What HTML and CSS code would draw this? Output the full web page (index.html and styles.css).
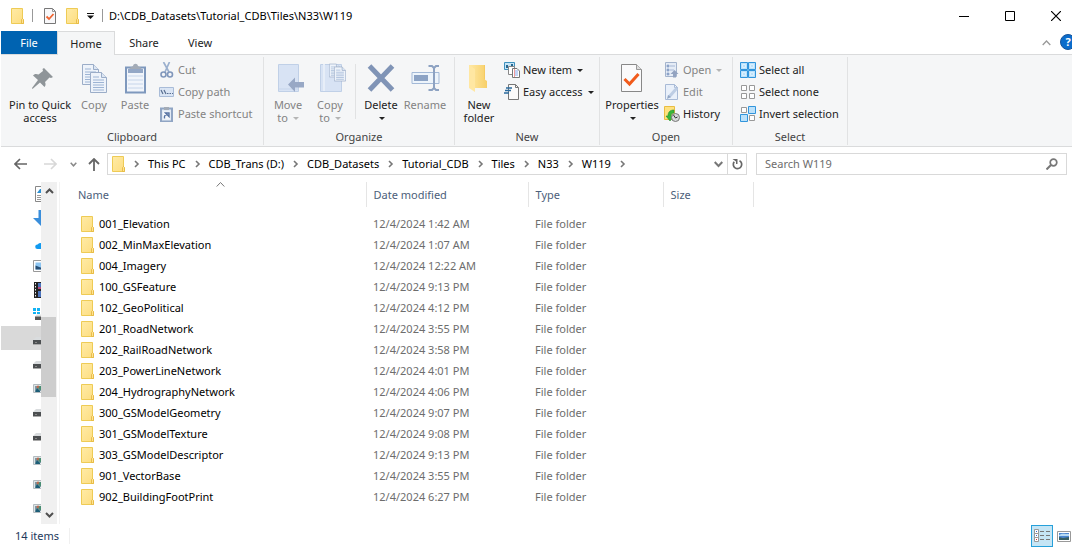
FILE: index.html
```html
<!DOCTYPE html>
<html lang="en">
<head>
<meta charset="utf-8">
<title>W119</title>
<link rel="stylesheet" href="styles.css">
</head>
<body>
<svg class="defs" aria-hidden="true">
  <defs>
    <linearGradient id="fold" x1="0" y1="0" x2="1" y2="1"><stop offset="0" stop-color="#ffeba6"/><stop offset="1" stop-color="#fddd80"/></linearGradient>
    <linearGradient id="flap" x1="0" y1="0" x2="1" y2="0"><stop offset="0" stop-color="#ffe9a6"/><stop offset="1" stop-color="#f7cf68"/></linearGradient>
  </defs>
  <symbol id="folder" viewBox="0 0 13 16"><path d="M.5.5h11v10.500l1 1v3.500H.5z" fill="url(#fold)" stroke="#eecb55"/><path d="M10.500 15.500v-4l1-1 1 1v4z" fill="#ffe391" stroke="#e3b53c" stroke-width=".8"/></symbol>
  <symbol id="chev" viewBox="0 0 8 8"><path d="M2 1 5 4 2 7" fill="none" stroke="#777" stroke-width="1.600"/></symbol>
  <symbol id="sheet" viewBox="0 0 17 21"><path d="M.5.5h11l5 5v15H.5z" fill="#eef3fa" stroke="#9badc8"/><path d="M11.500.5v5h5" fill="#dce6f3" stroke="#9badc8"/><path d="M3 5h6M3 8h11M3 10.500h11M3 13h11M3 15.500h11M3 18h11" stroke="#9db4d4"/></symbol>
  <symbol id="drive" viewBox="0 0 16 16"><path d="M3 7h10l3 3H0z" fill="#d9dcde"/><path d="M0 10h16v4H0z" fill="#4c4f51"/><path d="M0 14.500h16" stroke="#aaa"/><path d="M2 12.500h2" stroke="#888"/></symbol>
  <symbol id="netdrive" viewBox="0 0 16 16"><path d="M.5 6.500h15v8H.5z" fill="#dfe5e7" stroke="#b4bcc0"/><path d="M2 8h12v5H2z" fill="#7c99a6"/><circle cx="5" cy="9" r="1.500" fill="#bd6b50"/><path d="M2 14l2-4 3 3v1z" fill="#1c5e77"/><circle cx="7.500" cy="10" r="2" fill="#488e72"/></symbol>
</svg>

<header class="titlebar">
  <svg class="ico-folder" aria-hidden="true"><use href="#folder"/></svg>
  <span class="bar"></span>
  <button class="plain" aria-label="Properties"><svg width="12" height="16" viewBox="0 0 12 16"><path d="M.5.5h8l3 3v12H.5z" fill="#f8f8fa" stroke="#777"/><path d="M8.500.5v3h3" fill="none" stroke="#999"/><path d="m2.500 8.500 2.500 2.500 4.500-5" fill="none" stroke="#ef6532" stroke-width="1.800"/></svg></button>
  <button class="plain" aria-label="New folder"><svg class="ico-folder"><use href="#folder"/></svg></button>
  <button class="plain" aria-label="Customize toolbar"><svg width="7" height="6" viewBox="0 0 7 6"><path d="M0 .5h7" stroke="#111"/><path d="M0 2.500h7L3.500 6z" fill="#111"/></svg></button>
  <span class="bar last"></span>
  <h1 class="title">D:\CDB_Datasets\Tutorial_CDB\Tiles\N33\W119</h1>
  <div class="caption">
    <button aria-label="Minimize"><svg width="10" height="10"><path d="M0 5.500h10" stroke="#000"/></svg></button>
    <button aria-label="Maximize"><svg width="10" height="10"><path d="M.5.5h9v9h-9z" fill="none" stroke="#000"/></svg></button>
    <button aria-label="Close"><svg width="10" height="10"><path d="m0 0 10 10M10 0 0 10" stroke="#000" stroke-width="1.200"/></svg></button>
  </div>
</header>

<nav class="tabs">
  <button class="tab file">File</button>
  <button class="tab active">Home</button>
  <button class="tab">Share</button>
  <button class="tab view">View</button>
  <button class="plain collapse" aria-label="Collapse ribbon"><svg width="9" height="6"><path d="m.7 5 3.800-4 3.800 4" fill="none" stroke="#999" stroke-width="1.300"/></svg></button>
  <button class="plain help" aria-label="Help">?</button>
</nav>

<section class="ribbon">
  <div class="group clipboard">
    <div class="tools">
      <button class="big wide"><svg width="32" height="32" viewBox="0 0 32 32"><path d="m20 6 9 9-2 1-1.500-.5-4.500 4.500c1 2 .5 4-.5 5l-4.500-4.500L8.500 27 8 26l6-8-5-4.500c1-1.500 3-2 5.500-1L19 9l-.5-2z" fill="#8f9599"/></svg>Pin to Quick<br>access</button>
      <button class="big slim" disabled><svg width="32" height="32" viewBox="0 0 32 32"><use href="#sheet" x="4" y="2" width="17" height="21"/><use href="#sheet" x="12" y="10" width="17" height="21"/></svg>Copy</button>
      <button class="big" disabled><svg width="32" height="32" viewBox="0 0 32 32"><path d="M7 5.500h19v25H7z" fill="#f1f5fb" stroke="#7e98bd" stroke-width="2"/><path d="M9 7h15v4H9z" fill="#93a7c6"/><path d="M10.500 7c0-2 3-2 3.500-3C14.500 1 18.500 1 19 4c.5 1 3.500 1 3.500 3z" fill="#a3abb6"/><path d="M9 14h15M9 18h15M9 22h15M9 26h15" stroke="#c6d5ea"/></svg>Paste</button>
      <div class="stack">
        <button class="small" disabled><svg width="16" height="16" viewBox="0 0 16 16"><path d="m4.500 0 5.500 10M10.500 0 6 10" stroke="#9bb0ce" stroke-width="1.700"/><circle cx="4.500" cy="12.500" r="2.500" fill="none" stroke="#8097bb" stroke-width="1.600"/><circle cx="11" cy="12.500" r="2.500" fill="none" stroke="#8097bb" stroke-width="1.600"/></svg>Cut</button>
        <button class="small" disabled><svg width="16" height="16" viewBox="0 0 16 16"><path d="M.5 3.500h14v9H.5z" fill="#dae5f4" stroke="#a9bcd8"/><path d="m2 6 2 4M5 6l2 4M8 9.500h1.500M10.500 9.500H12M13 9.500h1" stroke="#586e91" stroke-width="1.200"/></svg>Copy path</button>
        <button class="small" disabled><svg width="16" height="16" viewBox="0 0 16 16"><path d="M2 2.500h11v13H2z" fill="#e2eaf5" stroke="#90a5c4" stroke-width="2"/><path d="M5 1h5v3H5z" fill="#a3abb6"/><path d="M4 5.500h7v8H4z" fill="#f5f8fc"/><path d="M5.500 12.500c-.5-3 1-4 2.500-4M6.500 7H10v3.500z" fill="none" stroke="#5572a3" stroke-width="1.400"/></svg>Paste shortcut</button>
      </div>
    </div>
    <div class="label">Clipboard</div>
  </div>
  <div class="group organize">
    <div class="tools">
      <button class="big" disabled><svg width="32" height="32" viewBox="0 0 32 32"><path d="M6.500 2.500h20v27h-20z" fill="#d8e3f4" stroke="#c0d0e7"/><path d="M7 27h19" stroke="#c6d5eb"/><path d="m16 22.500 7-7v4.500h9v5.500h-9V30z" fill="#98a8c5"/></svg>Move<br>to <i class="arrow"></i></button>
      <button class="big" disabled><svg width="32" height="32" viewBox="0 0 32 32"><path d="M6.500 2.500h21v27h-21z" fill="#d8e3f4" stroke="#c0d0e7"/><path d="M10 2v27" stroke="#e7eef8" stroke-width="2"/><use href="#sheet" x="15" y="1" width="11" height="15"/><use href="#sheet" x="20" y="4" width="12" height="16"/></svg>Copy<br>to <i class="arrow"></i></button>
      <span class="divider"></span>
      <button class="big"><svg width="32" height="32" viewBox="0 0 32 32"><path d="m4.500 4 23 24M27.500 4l-23 24" stroke="#8094b6" stroke-width="5"/></svg>Delete<br><i class="arrow"></i></button>
      <button class="big rename" disabled><svg width="32" height="32" viewBox="0 0 32 32"><path d="M3 10.500h27v11H3z" fill="#edf4fb" stroke="#a3b9d7"/><path d="M5 13h14v6H5z" fill="#8ca3c5"/><path d="M19.500 4h3.500l2 2 2-2h3M25 5v22M19.500 28H23l2-2 2 2h3" fill="none" stroke="#8da2c2" stroke-width="2"/></svg>Rename</button>
    </div>
    <div class="label">Organize</div>
  </div>
  <div class="group new">
    <div class="tools">
      <button class="big"><svg width="32" height="32" viewBox="0 0 32 32"><path d="M6 3h16v20l2 1v2H11z" fill="#f5ca61"/><path d="M6 3h15v14l3 2v7H11z" fill="url(#flap)"/><path d="m6 3 6 4v23l-6-4z" fill="#ffe7a2"/></svg>New<br>folder</button>
      <div class="stack">
        <button class="small"><svg width="16" height="16" viewBox="0 0 16 16"><path d="M.5.500h10v7H.5z" fill="#c7e5f6" stroke="#3e91be"/><path d="M2 3h2v3H2zM7 2h2v3H7z" fill="#27668f"/><path d="M4.500 4.500h6v8h-6z" fill="#fff" stroke="#888"/><path d="M8.500 6.500h4.500l2.500 2.500v6.500h-7z" fill="#fff" stroke="#777"/><path d="M10 9h4M10 11h4M10 13h4" stroke="#86a8ec"/><path d="M10.500 7v8" stroke="#f19a9a"/></svg>New item <i class="arrow"></i></button>
        <button class="small"><svg width="16" height="16" viewBox="0 0 16 16"><path d="M4.500.5h7l3 3v12h-10z" fill="#fafafa" stroke="#777"/><path d="M11.500.5v3h3" fill="none" stroke="#777"/><path d="M2 4h6M1 6.500h6M0 9h5" stroke="#2a6b9f" stroke-width="1.300"/></svg>Easy access <i class="arrow"></i></button>
      </div>
    </div>
    <div class="label">New</div>
  </div>
  <div class="group open">
    <div class="tools">
      <button class="big mid"><svg width="32" height="32" viewBox="0 0 32 32"><path d="M5.500 2.500h15l5 5v22h-20z" fill="#fafafb" stroke="#888"/><path d="M20.500 2.500v5h5" fill="#ddd" stroke="#999"/><path d="m8.500 17 5 5 9-10" fill="none" stroke="#f15b1c" stroke-width="3"/></svg>Properties<br><i class="arrow"></i></button>
      <div class="stack">
        <button class="small" disabled><svg width="16" height="16" viewBox="0 0 16 16"><path d="M1.500.5h11v14h-11z" fill="#e5ecf6" stroke="#a4b4cd"/><path d="M3 3h2v2H3zM3 7h2v2H3zM3 11h2v2H3zM6 4h5M6 8h4" stroke="#8ca4c8" fill="#8ca4c8" stroke-width=".7"/><path d="m6.500 12 4-4 4 4H12v3.500H9V12z" fill="#93a3c0"/></svg>Open <i class="arrow"></i></button>
        <button class="small" disabled><svg width="16" height="16" viewBox="0 0 16 16"><path d="M1.500.5h9l3 3v12h-12z" fill="#e9f0fa" stroke="#a8bad6"/><path d="M10.500.5v3h3" fill="none" stroke="#a8bad6"/><path d="m5 13 8-9" stroke="#bdcde4" stroke-width="3"/><path d="m3 15 1-4 3 2z" fill="#92a6c5"/></svg>Edit</button>
        <button class="small"><svg width="16" height="16" viewBox="0 0 16 16"><path d="M.5.5h10v13H.5z" fill="#ffe280" stroke="#e9bd42"/><path d="M10 4c-4 0-6 2-6 6H2l4 5 4-5H7c0-2 1-3 3-3z" fill="#37b63a" stroke="#23902b" stroke-width=".6"/><circle cx="11.500" cy="11.500" r="4" fill="#d7dadb" stroke="#777"/><path d="m9.500 9 2 3 2-1" fill="none" stroke="#333"/></svg>History</button>
      </div>
    </div>
    <div class="label">Open</div>
  </div>
  <div class="group select">
    <div class="tools">
      <div class="stack">
        <button class="small"><svg width="16" height="16" viewBox="0 0 16 16" fill="#bce1fa" stroke="#3195dc"><path d="M.5.5h7v7h-7zM8.500.5h7v7h-7zM.5 8.500h7v7h-7zM8.500 8.500h7v7h-7z"/><path d="M2.500 2.500h3v3h-3zM10.500 2.500h3v3h-3zM2.500 10.500h3v3h-3zM10.500 10.500h3v3h-3z" stroke="#d9f0ff"/></svg>Select all</button>
        <button class="small"><svg width="16" height="16" viewBox="0 0 16 16"><path d="M1.500 1.500h5v5h-5zM9.500 1.500h5v5h-5zM1.500 9.500h5v5h-5zM9.500 9.500h5v5h-5z" fill="#fff" stroke="#999"/></svg>Select none</button>
        <button class="small"><svg width="16" height="16" viewBox="0 0 16 16"><path d="M1.500 1.500h5v5h-5zM9.500 9.500h5v5h-5z" fill="#fff" stroke="#999"/><path d="M8.500.5h7v7h-7zM.5 8.500h7v7h-7z" fill="#bce1fa" stroke="#3195dc"/></svg>Invert selection</button>
      </div>
    </div>
    <div class="label">Select</div>
  </div>
</section>

<div class="navbar">
  <button class="plain" aria-label="Back"><svg width="13" height="12"><path d="M6 1 1 6l5 5M1 6h12" fill="none" stroke="#666" stroke-width="1.700"/></svg></button>
  <button class="plain forward" aria-label="Forward"><svg width="13" height="12"><path d="m7 1 5 5-5 5M12 6H0" fill="none" stroke="#d8d8d8" stroke-width="1.600"/></svg></button>
  <button class="plain recent" aria-label="Recent locations"><svg width="7" height="5"><path d="m.7.800 2.800 3 2.800-3" fill="none" stroke="#888" stroke-width="1.500"/></svg></button>
  <button class="plain up" aria-label="Up"><svg width="12" height="13"><path d="m1 6 5-5 5 5M6 1v12" fill="none" stroke="#666" stroke-width="1.800"/></svg></button>
  <div class="address">
    <svg class="ico-folder" aria-hidden="true"><use href="#folder"/></svg>
    <svg class="chev"><use href="#chev"/></svg><a href="#">This PC</a>
    <svg class="chev"><use href="#chev"/></svg><a href="#">CDB_Trans (D:)</a>
    <svg class="chev"><use href="#chev"/></svg><a href="#">CDB_Datasets</a>
    <svg class="chev"><use href="#chev"/></svg><a href="#">Tutorial_CDB</a>
    <svg class="chev"><use href="#chev"/></svg><a href="#">Tiles</a>
    <svg class="chev"><use href="#chev"/></svg><a href="#">N33</a>
    <svg class="chev"><use href="#chev"/></svg><a href="#">W119</a>
    <svg class="chev"><use href="#chev"/></svg>
    <button class="plain drop" aria-label="Previous locations"><svg width="9" height="7"><path d="m.7 1 3.800 4 3.800-4" fill="none" stroke="#777" stroke-width="2"/></svg></button>
    <button class="plain refresh" aria-label="Refresh"><svg width="11" height="12" viewBox="0 0 11 12"><path d="M2.200 3.800a4.200 4.200 0 1 0 5.300-1.100" fill="none" stroke="#666" stroke-width="1.700"/><path d="M.5 1h5v5H4V3.500z" fill="#666"/></svg></button>
  </div>
  <form class="search">
    <input type="search" aria-label="Search W119" placeholder="Search W119">
    <button class="plain" type="button" aria-label="Search"><svg width="12" height="12"><circle cx="7.500" cy="4.500" r="3.300" fill="none" stroke="#777" stroke-width="1.700"/><path d="m5 7-4.500 4.500" stroke="#777" stroke-width="2"/></svg></button>
  </form>
</div>

<main class="body">
  <aside class="tree">
    <ul class="tree-items">
      <li><svg viewBox="0 0 16 16"><path d="M2.500.5h12v15h-12z" fill="#fff" stroke="#888"/><path d="m4 7 3-4h1v4z" fill="#2c90d3"/><path d="M4 9.500h8M4 11.500h8M4 13.500h8" stroke="#999"/></svg></li>
      <li><svg viewBox="0 0 16 16"><path d="M5.500 0h5v8H16l-8 8-8-8h5.500z" fill="#3a8edb"/></svg></li>
      <li><svg viewBox="0 0 16 16"><path d="M4.500 15a2.300 2.300 0 0 1 0-4.600 5 5 0 0 1 7 0 2.300 2.300 0 0 1 0 4.600z" fill="#119af0"/></svg></li>
      <li><svg viewBox="0 0 16 16"><path d="M.5 2.500h15v11H.5z" fill="#fff" stroke="#999"/><path d="M2.500 4.500h11v7h-11z" fill="#8cc5f2"/><path d="M2.500 11.500v-4l5 2h6v2z" fill="#274f75"/></svg></li>
      <li><svg viewBox="0 0 16 16"><path d="M1 0h14v16H1z" fill="#222"/><path d="M5 1h9v6H5zM5 9h9v6H5z" fill="#4b73bd"/><path d="M5 5h3v2H5z" fill="#b6477c"/><path d="M2.500 1v14" stroke="#eee" stroke-dasharray="1.500"/></svg></li>
      <li><svg viewBox="0 0 16 16"><path d="M0 2h3v3H0zM4 2h3v3H4zM0 6h3v2H0zM4 6h3v2H4z" fill="#12b3f4"/><path d="M4 8.500h10l2 2H2z" fill="#ddd"/><path d="M2 10.500h14V14H2z" fill="#555"/></svg></li>
      <li class="selected"><svg><use href="#drive"/></svg></li>
      <li><svg><use href="#drive"/></svg></li>
      <li><svg><use href="#netdrive"/></svg></li>
      <li><svg><use href="#drive"/></svg></li>
      <li><svg><use href="#drive"/></svg></li>
      <li><svg><use href="#netdrive"/></svg></li>
      <li><svg><use href="#netdrive"/></svg></li>
      <li><svg><use href="#netdrive"/></svg></li>
    </ul>
    <div class="scrollbar">
      <svg width="9" height="6"><path d="m1 5 3.500-3.500L8 5" fill="none" stroke="#505050" stroke-width="2"/></svg>
      <span class="track-above"></span><span class="thumb"></span><span class="track-below"></span>
      <svg width="9" height="6"><path d="m1 1 3.500 3.500L8 1" fill="none" stroke="#505050" stroke-width="2"/></svg>
    </div>
  </aside>
  <div class="pane">
    <table class="files">
      <colgroup><col class="c-name"><col class="c-date"><col class="c-type"><col class="c-size"><col></colgroup>
      <thead><tr><th class="sorted">Name<svg class="sort" width="9" height="5"><path d="m.7 4.500 3.800-4 3.800 4" fill="none" stroke="#777"/></svg></th><th>Date modified</th><th>Type</th><th>Size</th><td></td></tr></thead>
      <tbody>
        <tr><td><svg><use href="#folder"/></svg>001_Elevation</td><td>12/4/2024 1:42 AM</td><td>File folder</td><td></td></tr>
        <tr><td><svg><use href="#folder"/></svg>002_MinMaxElevation</td><td>12/4/2024 1:07 AM</td><td>File folder</td><td></td></tr>
        <tr><td><svg><use href="#folder"/></svg>004_Imagery</td><td>12/4/2024 12:22 AM</td><td>File folder</td><td></td></tr>
        <tr><td><svg><use href="#folder"/></svg>100_GSFeature</td><td>12/4/2024 9:13 PM</td><td>File folder</td><td></td></tr>
        <tr><td><svg><use href="#folder"/></svg>102_GeoPolitical</td><td>12/4/2024 4:12 PM</td><td>File folder</td><td></td></tr>
        <tr><td><svg><use href="#folder"/></svg>201_RoadNetwork</td><td>12/4/2024 3:55 PM</td><td>File folder</td><td></td></tr>
        <tr><td><svg><use href="#folder"/></svg>202_RailRoadNetwork</td><td>12/4/2024 3:58 PM</td><td>File folder</td><td></td></tr>
        <tr><td><svg><use href="#folder"/></svg>203_PowerLineNetwork</td><td>12/4/2024 4:01 PM</td><td>File folder</td><td></td></tr>
        <tr><td><svg><use href="#folder"/></svg>204_HydrographyNetwork</td><td>12/4/2024 4:06 PM</td><td>File folder</td><td></td></tr>
        <tr><td><svg><use href="#folder"/></svg>300_GSModelGeometry</td><td>12/4/2024 9:07 PM</td><td>File folder</td><td></td></tr>
        <tr><td><svg><use href="#folder"/></svg>301_GSModelTexture</td><td>12/4/2024 9:08 PM</td><td>File folder</td><td></td></tr>
        <tr><td><svg><use href="#folder"/></svg>303_GSModelDescriptor</td><td>12/4/2024 9:13 PM</td><td>File folder</td><td></td></tr>
        <tr><td><svg><use href="#folder"/></svg>901_VectorBase</td><td>12/4/2024 3:55 PM</td><td>File folder</td><td></td></tr>
        <tr><td><svg><use href="#folder"/></svg>902_BuildingFootPrint</td><td>12/4/2024 6:27 PM</td><td>File folder</td><td></td></tr>
      </tbody>
    </table>
  </div>
</main>

<footer class="status">
  <span class="count">14 items</span>
  <button class="plain viewbtn on" aria-label="Details view"><svg width="16" height="14"><path d="M.5.5h4v4h-4zM.5 4.500h4v4h-4zM.5 8.500h4v4h-4z" fill="#fff" stroke="#999"/><path d="M2 2.500h1M2 6.500h1" stroke="#36c"/><path d="M2 10.500h1" stroke="#c33"/><path d="M6 2.500h4M12 2.500h4M6 6.500h4M12 6.500h4M6 10.500h4M12 10.500h4" stroke="#777"/></svg></button>
  <button class="plain viewbtn" aria-label="Large icons view"><svg width="14" height="11"><path d="M.5.5h13v10H.5z" fill="#fff" stroke="#999"/><path d="M2 2h10v7H2z" fill="#4c87d0"/><path d="M2 4c3-2 5-1 10-1v2H2z" fill="#b7daf3"/><path d="m2 6 4 1 6-1v3H2z" fill="#375f63"/></svg></button>
</footer>
</body>
</html>
```
FILE: styles.css
```css
* { box-sizing: border-box; }
body {
  margin: 0;
  min-height: 100vh;
  display: flex;
  flex-direction: column;
  overflow: hidden;
  padding-left: 1px;
  background: #fff;
  color: #000;
  font: 11px/16px "Segoe UI", "Noto Sans", "Open Sans", sans-serif;
}
svg { display: block; flex: none; }
button { font: inherit; color: inherit; border: 0; padding: 0; background: none; }
.defs { position: absolute; width: 0; height: 0; }
.plain { display: flex; align-items: center; justify-content: center; }
.ico-folder { width: 13px; height: 16px; }

.titlebar { display: flex; align-items: center; height: 31px; padding-left: 10px; gap: 8px; }
.titlebar .bar { width: 1px; height: 13px; background: #999; margin-right: 3px; }
.titlebar .bar.last { margin-right: -2px; }
.titlebar .plain:nth-of-type(1) { margin-right: 2px; }
.title { margin: 0; font-size: 11px; font-weight: 400; white-space: nowrap; }
.caption { display: flex; margin: 0 -7px 0 auto; }
.caption button { display: grid; place-items: center; width: 46px; height: 31px; }

.tabs { display: flex; height: 23px; align-items: stretch; color: #222; }
.tab { width: 58px; height: 24px; }
.tab.file { width: 56px; height: 23px; background: #0063b1; color: #fff; }
.tab.active { background: #f5f6f7; border: 1px solid #dadbdc; border-bottom: 0; z-index: 1; }
.tab.view { width: 54px; }
.collapse { margin-left: auto; width: 16px; }
.help { flex: none; width: 16px; height: 16px; margin: 3px -4px 0 6px; border-radius: 50%; background: #0b6ccb; border: 1px solid #15549b; color: #fff; font-weight: 700; }

.ribbon { display: flex; height: 93px; background: #f5f6f7; border: solid #dadbdc; border-width: 1px 0; padding: 2px 0 1px; color: #222; }
.group { display: flex; flex-direction: column; justify-content: space-between; border-right: 1px solid #e1e2e3; }
.tools { display: flex; white-space: nowrap; }
.group .label { text-align: center; color: #444; }
.clipboard { width: 263px; padding: 0 5px; }
.organize { width: 191px; padding: 0 3px; }
.new { width: 145px; padding: 0 1px; }
.open { width: 133px; padding: 0 3px; }
.select { width: 115px; padding: 0 7px; }
.big { display: block; width: 42px; padding-top: 5px; line-height: 13px; align-self: flex-start; }
.big svg { margin: 0 auto 4px; }
.big.wide { width: 68px; }
.big.slim { width: 40px; }
.big.mid { width: 58px; }
.big.rename { width: 46px; }
.new .big { width: 46px; }
.stack { display: flex; flex-direction: column; padding: 2px 0 0 3px; }
.new .stack { padding-left: 2px; }
.select .stack { padding-left: 0; }
.small { display: flex; align-items: center; gap: 3px; height: 22px; }
button:disabled { color: #838383; }
.arrow { display: inline-block; vertical-align: 2px; border: solid transparent; border-width: 3px 3px 0; border-top-color: #222; margin-left: 2px; }
button:disabled .arrow { border-top-color: #b5b5b5; }
.divider { width: 1px; height: 55px; margin: 7px 4px 0; background: #e1e2e3; }

.navbar { display: flex; align-items: center; height: 35px; padding: 0 5px 1px 13px; }
.forward { margin-left: 17px; }
.recent { margin-left: 13px; }
.up { margin: 0 7px 0 11px; }
.address { display: flex; flex: 634; align-items: center; height: 22px; border: 1px solid #d9d9d9; padding-left: 4px; white-space: nowrap; }
.address .chev { width: 8px; height: 8px; margin: 0 7px 0 8px; }
.address a { color: #000; text-decoration: none; }
.address .drop { margin-left: auto; width: 17px; height: 20px; }
.address .refresh { width: 19px; height: 20px; border-left: 1px solid #d9d9d9; }
.search { display: flex; flex: 293; align-items: center; height: 22px; margin: 0 0 0 9px; padding: 0 8px; border: 1px solid #d9d9d9; }
.search input { flex: 1; min-width: 0; padding: 0; border: 0; outline: 0; font: inherit; }
.search input::placeholder { color: #6d6d6d; opacity: 1; }

.body { display: flex; flex: 1; }
.tree { display: flex; width: 56px; }
.tree-items { width: 40px; margin: 0; padding: 0; list-style: none; overflow: hidden; }
.tree-items li { display: flex; align-items: center; height: 24px; padding-left: 32px; }
.tree-items svg { width: 16px; height: 16px; }
.tree-items .selected { background: #d9d9d9; }
.scrollbar { display: flex; flex-direction: column; align-items: center; width: 16px; padding: 6px 0; background: #f0f0f0; }
.track-above { flex: 123; }
.thumb { flex: 80; width: 15px; align-self: flex-start; background: #cdcdcd; }
.track-below { flex: 115; }
.pane { flex: 1; margin-left: 2px; border-left: 1px solid #f3f3f3; }
.files { width: 100%; table-layout: fixed; border-collapse: collapse; color: #6d6d6d; white-space: nowrap; }
.c-name { width: 306px; }
.c-date { width: 162px; }
.c-type { width: 135px; }
.c-size { width: 90px; }
.files th { height: 25px; padding: 0 0 0 7px; text-align: left; font-weight: 400; color: #4c607a; border-right: 1px solid #e5e5e5; }
.files .sorted { position: relative; padding-left: 18px; }
.sort { position: absolute; top: 0; left: 51%; }
.files tbody::before { content: ""; display: block; height: 6px; }
.files tbody td { height: 21px; padding: 0 0 0 7px; }
.files tbody td:first-child { display: flex; align-items: center; gap: 5px; padding-left: 21px; color: #000; }
.files tbody svg { width: 13px; height: 16px; }

.status { display: flex; align-items: center; height: 25px; padding-bottom: 1px; color: #1e395b; }
.count { padding: 0 10px 0 14px; border-right: 1px solid #f0f0f0; margin-right: auto; }
.viewbtn { width: 22px; height: 22px; }
.viewbtn.on { background: #c5e5f5; border: 1px solid #26a0da; }
.viewbtn + .viewbtn { margin-right: -3px; }
```
